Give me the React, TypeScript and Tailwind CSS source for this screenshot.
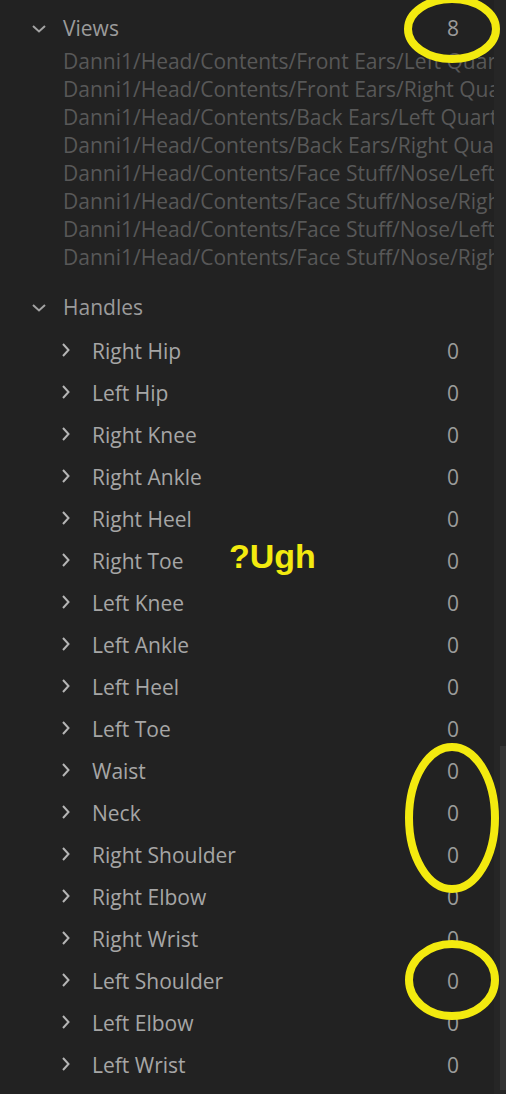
const paths = [
    "Danni1/Head/Contents/Front Ears/Left Quarter",
    "Danni1/Head/Contents/Front Ears/Right Quarter",
    "Danni1/Head/Contents/Back Ears/Left Quarter",
    "Danni1/Head/Contents/Back Ears/Right Quarter",
    "Danni1/Head/Contents/Face Stuff/Nose/Left Quarter",
    "Danni1/Head/Contents/Face Stuff/Nose/Right Quarter",
    "Danni1/Head/Contents/Face Stuff/Nose/Left Quarter",
    "Danni1/Head/Contents/Face Stuff/Nose/Right Quarter",
];

const handles = [
    "Right Hip", "Left Hip", "Right Knee", "Right Ankle", "Right Heel", "Right Toe",
    "Left Knee", "Left Ankle", "Left Heel", "Left Toe", "Waist", "Neck",
    "Right Shoulder", "Right Elbow", "Right Wrist", "Left Shoulder", "Left Elbow", "Left Wrist",
];

function ChevronDown() {
    return (
        <svg width="14" height="8" viewBox="0 0 14 8" fill="none" stroke="#a3a3a3" strokeWidth="2">
            <path d="M1 1 L7 6.5 L13 1" />
        </svg>
    );
}

function ChevronRight() {
    return (
        <svg width="8" height="14" viewBox="0 0 8 14" fill="none" stroke="#b5b5b5" strokeWidth="2">
            <path d="M1 1 L6.5 7 L1 13" />
        </svg>
    );
}

export default function App() {
    return (
        <div className="relative w-[506px] h-[1094px] overflow-hidden bg-[#222222] flex font-['Open_Sans',sans-serif]">
            <div className="w-[494px] flex flex-col pt-[14px]">
                {/* Views */}
                <div className="flex items-center h-[30px]">
                    <div className="w-[63px] flex justify-center pl-[15px]"><ChevronDown /></div>
                    <span className="flex-1 text-[21px] text-[#9b9b9b]">Views</span>
                    <span className="w-[47px] text-[21px] text-[#9b9b9b]">8</span>
                </div>
                <div className="flex flex-col pl-[63px] pt-[3px]">
                    {paths.map((p, i) => (
                        <div key={i} className="h-[28px] leading-[28px] text-[21px] text-[#585858] whitespace-nowrap overflow-hidden">{p}</div>
                    ))}
                </div>

                {/* Handles */}
                <div className="flex items-center h-[30px] mt-[22px]">
                    <div className="w-[63px] flex justify-center pl-[15px]"><ChevronDown /></div>
                    <span className="flex-1 text-[21px] text-[#9b9b9b]">Handles</span>
                </div>
                <div className="flex flex-col pt-[8px]">
                    {handles.map((h) => (
                        <div key={h} className="flex items-center h-[42px]">
                            <div className="w-[92px] pl-[62px] pb-[4px] flex"><ChevronRight /></div>
                            <span className="flex-1 text-[21px] text-[#a6a6a6]">{h}</span>
                            <span className="w-[47px] text-[21px] text-[#9b9b9b]">0</span>
                        </div>
                    ))}
                </div>
            </div>

            {/* scrollbar */}
            <div className="w-[12px] bg-[#262626] flex flex-col">
                <div className="h-[746px]" />
                <div className="ml-[6px] w-[6px] h-[344px] bg-[#343434]" />
            </div>

            {/* annotations */}
            <svg className="absolute left-0 top-0 pointer-events-none" width="506" height="1094">
                <ellipse cx="452" cy="29" rx="44" ry="30" fill="none" stroke="#f3ea0f" strokeWidth="8" />
                <ellipse cx="452" cy="818" rx="43" ry="71" fill="none" stroke="#f3ea0f" strokeWidth="8" />
                <ellipse cx="452" cy="980" rx="43" ry="36" fill="none" stroke="#f3ea0f" strokeWidth="8" />
            </svg>
            <div className="absolute left-[229px] top-[531px] text-[34px] font-bold text-[#f3ea0f] font-['Liberation_Sans',sans-serif]">?Ugh</div>
        </div>
    );
}
